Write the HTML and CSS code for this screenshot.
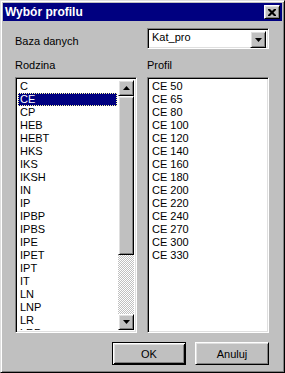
FILE: index.html
```html
<!DOCTYPE html>
<html lang="pl">
<head>
    <meta charset="UTF-8">
    <meta name="viewport" content="width=device-width, initial-scale=1.0">
    <title>Wybór profilu</title>
    <link rel="stylesheet" href="styles.css">
</head>
<body>
    <div class="window">
        <div class="titlebar">
            <span class="title">Wybór profilu</span>
            <button class="close-btn raised" aria-label="Zamknij">
                <svg width="8" height="7" viewBox="0 0 8 7">
                    <path d="M0 0h2l2 2 2-2h2v1L5.5 3.5 8 6v1H6L4 5 2 7H0V6l2.5-2.5L0 1z" fill="#000"/>
                </svg>
            </button>
        </div>
        <div class="content">
            <label class="field-label db-label">Baza danych</label>
            <div class="combo sunken">
                <span class="combo-value">Kat_pro</span>
                <span class="combo-btn raised">
                    <svg width="7" height="4" viewBox="0 0 7 4"><path d="M0 0h7L3.5 4z" fill="#000"/></svg>
                </span>
            </div>

            <div class="column">
                <div class="col-label">Rodzina</div>
                <div class="listbox sunken">
                    <ul class="items" id="familyList"></ul>
                    <div class="scrollbar">
                        <span class="sb-btn raised">
                            <svg width="7" height="4" viewBox="0 0 7 4"><path d="M3.5 0L7 4H0z" fill="#000"/></svg>
                        </span>
                        <span class="sb-thumb raised"></span>
                        <span class="sb-track"></span>
                        <span class="sb-btn raised">
                            <svg width="7" height="4" viewBox="0 0 7 4"><path d="M0 0h7L3.5 4z" fill="#000"/></svg>
                        </span>
                    </div>
                </div>
            </div>

            <div class="column">
                <div class="col-label">Profil</div>
                <div class="listbox sunken">
                    <ul class="items" id="profileList"></ul>
                </div>
            </div>

            <div class="actions">
                <button class="btn default">OK</button>
                <button class="btn raised">Anuluj</button>
            </div>
        </div>
    </div>
    <script>
        const families = ['C', 'CE', 'CP', 'HEB', 'HEBT', 'HKS', 'IKS', 'IKSH', 'IN', 'IP', 'IPBP',
            'IPBS', 'IPE', 'IPET', 'IPT', 'IT', 'LN', 'LNP', 'LR', 'LRP'];
        const profiles = [50, 65, 80, 100, 120, 140, 160, 180, 200, 220, 240, 270, 300, 330];

        function fillList(id, values, selected) {
            const list = document.getElementById(id);
            values.forEach(value => {
                const li = document.createElement('li');
                li.textContent = value;
                if (value === selected) li.classList.add('selected');
                list.appendChild(li);
            });
        }

        fillList('familyList', families, 'CE');
        fillList('profileList', profiles.map(p => 'CE ' + p));
    </script>
</body>
</html>
```
FILE: styles.css
```css
:root {
    --face: #c0c0c0;
    --light: #dfdfdf;
    --shadow: #808080;
    --dark: #000000;
    --navy: #000080;
}
html, body {
    margin: 0;
    padding: 0;
}
body {
    font-family: 'Liberation Sans', Arial, sans-serif;
    font-size: 11px;
    line-height: 13px;
    color: #000;
    background: var(--face);
}
.window {
    width: 285px;
    height: 373px;
    box-sizing: border-box;
    padding: 2px;
    background: var(--face);
    border: 1px solid;
    border-color: var(--light) var(--dark) var(--dark) var(--light);
    box-shadow: inset 1px 1px #fff, inset -1px -1px var(--shadow);
}
.raised {
    border: 1px solid;
    border-color: #fff var(--dark) var(--dark) #fff;
    box-shadow: inset 1px 1px var(--light), inset -1px -1px var(--shadow);
    background: var(--face);
    box-sizing: border-box;
}
.sunken {
    border: 1px solid;
    border-color: var(--shadow) #fff #fff var(--shadow);
    box-shadow: inset 1px 1px var(--dark), inset -1px -1px var(--light);
    box-sizing: border-box;
}
.titlebar {
    height: 18px;
    background: var(--navy);
    color: #fff;
    display: flex;
    align-items: center;
    justify-content: space-between;
    padding: 0 2px;
}
.title {
    font-weight: bold;
    font-size: 12px;
}
.close-btn {
    width: 16px;
    height: 14px;
    padding: 0;
    display: flex;
    align-items: center;
    justify-content: center;
}
.content {
    display: grid;
    grid-template-columns: 122px 122px;
    column-gap: 10px;
    padding: 7px 13px 0 12px;
}
.db-label {
    padding-top: 7px;
}
.combo {
    height: 21px;
    background: #fff;
    display: flex;
    justify-content: space-between;
    padding: 2px;
}
.combo-value {
    padding: 0 2px;
}
.combo-btn {
    width: 16px;
    height: 17px;
    display: flex;
    align-items: center;
    justify-content: center;
}
.column {
    margin-top: 10px;
}
.col-label {
    margin-bottom: 5px;
}
.listbox {
    height: 256px;
    background: #fff;
    padding: 2px;
    display: flex;
    overflow: hidden;
}
.items {
    list-style: none;
    margin: 0;
    padding: 0;
    flex: 1;
    overflow: hidden;
}
.items li {
    height: 13px;
    padding-left: 2px;
    white-space: nowrap;
}
.items li.selected {
    background: var(--navy);
    color: #fff;
    outline: 1px dotted #ffffa0;
    outline-offset: -1px;
    margin-right: 1px;
}
.scrollbar {
    width: 16px;
    display: flex;
    flex-direction: column;
}
.sb-btn {
    height: 16px;
    display: flex;
    align-items: center;
    justify-content: center;
}
.sb-thumb {
    height: 159px;
}
.sb-track {
    flex: 1;
    background-image: conic-gradient(#fff 25%, var(--face) 0 50%, #fff 0 75%, var(--face) 0);
    background-size: 2px 2px;
}
.actions {
    grid-column: 1 / 3;
    display: flex;
    justify-content: flex-end;
    gap: 9px;
    margin-top: 9px;
}
.btn {
    width: 74px;
    height: 23px;
    padding: 0;
    font-family: inherit;
    font-size: 11px;
    color: #000;
}
.btn.default {
    background: var(--face);
    border: 1px solid var(--dark);
    box-shadow: inset 1px 1px #fff, inset -1px -1px var(--dark), inset 2px 2px var(--light), inset -2px -2px var(--shadow);
}
```
